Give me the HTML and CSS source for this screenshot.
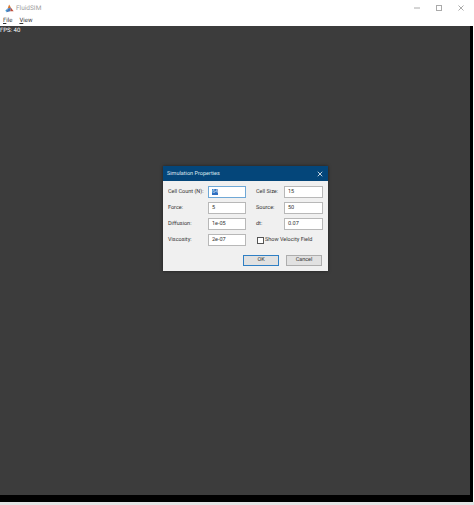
FILE: index.html
```html
<!DOCTYPE html>
<html lang="en">
<head>
    <meta charset="UTF-8">
    <meta name="viewport" content="width=device-width, initial-scale=1.0">
    <title>FluidSIM</title>
    <link rel="stylesheet" href="styles.css">
</head>
<body>
    <div class="window">
        <div class="titlebar">
            <svg class="app-icon" viewBox="0 0 12 12" width="9" height="9">
                <path d="M5.5 0.5 L8 5 L3.5 6 Z" fill="#d9782d"/>
                <path d="M3.5 6 L8 5 L7 9.5 L2 11 Z" fill="#4a78b8"/>
                <path d="M8 5 L11.5 9.5 L7 9.5 Z" fill="#c0503c"/>
                <path d="M0.5 8.5 L3.5 6 L2 11 Z" fill="#3f9ad0"/>
            </svg>
            <span class="app-title">FluidSIM</span>
            <div class="window-controls">
                <svg viewBox="0 0 8 8" width="8" height="8"><path d="M1 4 H7" stroke="#aaaaaa" fill="none"/></svg>
                <svg viewBox="0 0 8 8" width="8" height="8"><rect x="1.5" y="1.5" width="5" height="5" stroke="#aaaaaa" fill="none"/></svg>
                <svg viewBox="0 0 8 8" width="8" height="8"><path d="M1.5 1.5 L6.5 6.5 M6.5 1.5 L1.5 6.5" stroke="#aaaaaa" fill="none"/></svg>
            </div>
        </div>
        <div class="menubar">
            <span class="menu-item"><u>F</u>ile</span>
            <span class="menu-item"><u>V</u>iew</span>
        </div>
        <div class="canvas-frame">
            <div class="canvas">
                <div class="fps">FPS: 40</div>
            </div>
        </div>
    </div>

    <div class="dialog">
        <div class="dialog-title">
            <span>Simulation Properties</span>
            <svg viewBox="0 0 8 8" width="6" height="6"><path d="M1 1 L7 7 M7 1 L1 7" stroke="#ffffff" fill="none"/></svg>
        </div>
        <div class="dialog-body">
            <div class="fields">
                <label>Cell Count (N):</label>
                <div class="input selected-input"><span class="selected">64</span></div>
                <label class="second">Cell Size:</label>
                <div class="input">15</div>

                <label>Force:</label>
                <div class="input">5</div>
                <label class="second">Source:</label>
                <div class="input">50</div>

                <label>Diffusion:</label>
                <div class="input">1e-05</div>
                <label class="second">dt:</label>
                <div class="input">0.07</div>

                <label>Viscosity:</label>
                <div class="input">2e-07</div>
                <div class="check-row">
                    <span class="checkbox"></span>
                    <span>Show Velocity Field</span>
                </div>
            </div>
            <div class="actions">
                <div class="button default-button">OK</div>
                <div class="button">Cancel</div>
            </div>
        </div>
    </div>
</body>
</html>
```

FILE: styles.css
```css
* {
    box-sizing: border-box;
}

html, body {
    margin: 0;
    height: 505px;
    overflow: hidden;
}

body {
    font-family: Roboto, "Noto Sans", sans-serif;
    font-size: 5.5px;
    text-rendering: geometricPrecision;
    white-space: nowrap;
    background-color: #e4e4e4;
    position: relative;
}

.window {
    display: flex;
    flex-direction: column;
    height: 502px;
    background-color: #ffffff;
}

.titlebar {
    height: 14px;
    display: flex;
    align-items: center;
    padding: 2px 0 0 5px;
    flex-shrink: 0;
}

.app-title {
    font-size: 6.5px;
    color: #a0a0a0;
    margin-left: 2px;
}

.window-controls {
    margin-left: auto;
    display: flex;
    gap: 14px;
    padding-right: 9px;
}

.menubar {
    height: 12px;
    display: flex;
    align-items: center;
    gap: 7px;
    padding-left: 3px;
    font-size: 6px;
    color: #333333;
    flex-shrink: 0;
}

.canvas-frame {
    flex: 1;
    background-color: #000000;
    padding: 0 3px 7px 0;
    margin-right: 1px;
}

.canvas {
    height: 100%;
    background-color: #3c3c3c;
}

.fps {
    font-size: 6px;
    color: #ffffff;
    padding-top: 1px;
}

.dialog {
    position: absolute;
    left: 163px;
    top: 166px;
    width: 165px;
    height: 105px;
    background-color: #f0f0f0;
    box-shadow: 0 0 3px rgba(0, 0, 0, 0.5);
    color: #333333;
}

.dialog-title {
    height: 15px;
    background-color: #04467a;
    color: #dfe8f0;
    display: flex;
    align-items: center;
    justify-content: space-between;
    padding: 0 5px 0 4px;
}

.dialog-body {
    padding: 5px 5px 0;
}

.fields {
    display: grid;
    grid-template-columns: 40px 38px 38px 39px;
    grid-auto-rows: 12px;
    row-gap: 4px;
    align-items: center;
}

.second {
    padding-left: 10px;
}

.input {
    height: 12px;
    background-color: #ffffff;
    border: 1px solid #b8b8b8;
    padding-left: 3px;
    line-height: 10px;
}

.selected-input {
    border-color: #6fa8d6;
}

.selected {
    background-color: #2f6fc0;
    color: #cfe0f2;
}

.check-row {
    grid-column: 3 / 5;
    display: flex;
    align-items: center;
    gap: 1px;
    padding-left: 11px;
}

.checkbox {
    width: 7px;
    height: 7px;
    background-color: #ffffff;
    border: 1px solid #555555;
}

.actions {
    display: flex;
    gap: 7px;
    justify-content: flex-end;
    margin-top: 9px;
    padding-right: 1px;
}

.button {
    width: 36px;
    height: 11px;
    line-height: 9px;
    text-align: center;
    background-color: #e1e1e1;
    border: 1px solid #adadad;
}

.default-button {
    border-color: #2f7fc4;
}
```
